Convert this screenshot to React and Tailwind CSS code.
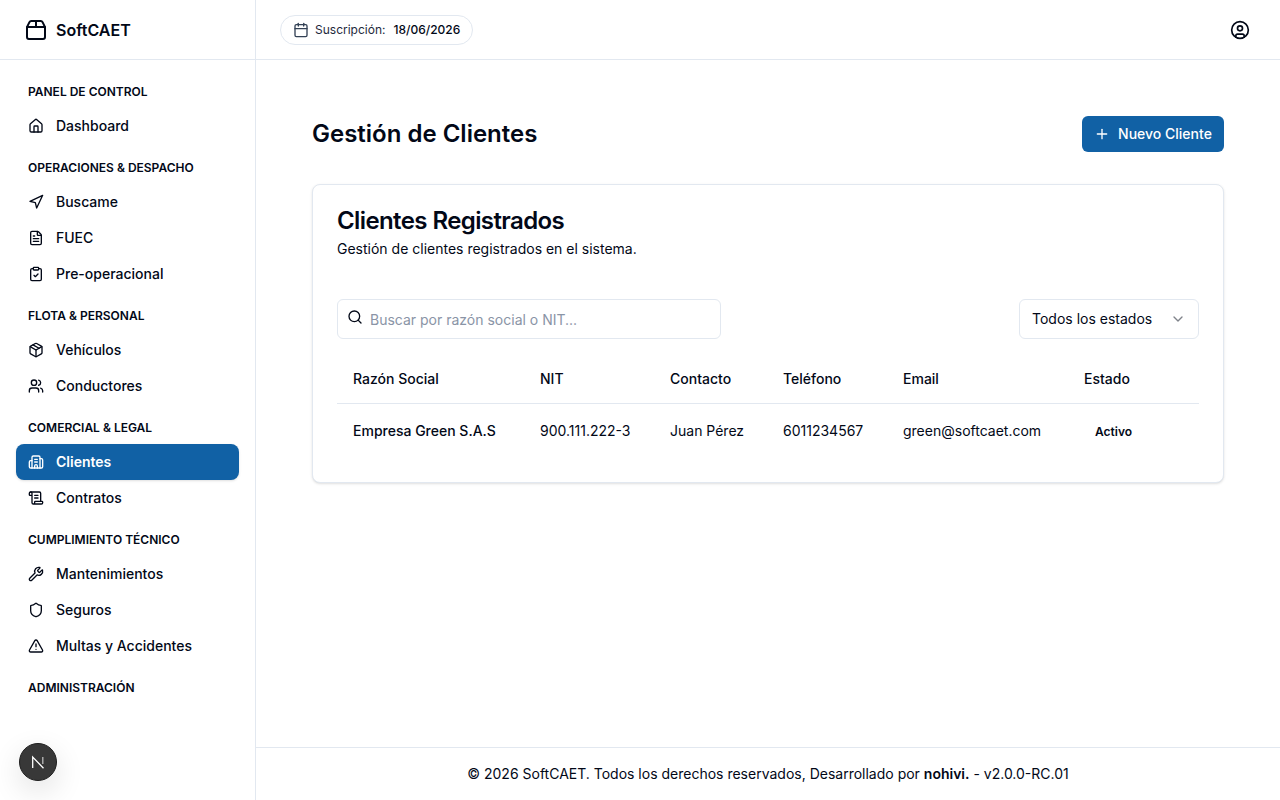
import React from 'react';
import { Package2, House, Navigation, FileText, ClipboardCheck, Package, Users, Building2, ScrollText, Wrench, Shield, TriangleAlert, Calendar, CircleUser, Plus, Search, ChevronDown } from 'lucide-react';

const sections = [
  { label: 'Panel de Control', items: [{ name: 'Dashboard', icon: House }] },
  { label: 'Operaciones & Despacho', items: [{ name: 'Buscame', icon: Navigation }, { name: 'FUEC', icon: FileText }, { name: 'Pre-operacional', icon: ClipboardCheck }] },
  { label: 'Flota & Personal', items: [{ name: 'Vehículos', icon: Package }, { name: 'Conductores', icon: Users }] },
  { label: 'Comercial & Legal', items: [{ name: 'Clientes', icon: Building2, active: true }, { name: 'Contratos', icon: ScrollText }] },
  { label: 'Cumplimiento Técnico', items: [{ name: 'Mantenimientos', icon: Wrench }, { name: 'Seguros', icon: Shield }, { name: 'Multas y Accidentes', icon: TriangleAlert }] },
  { label: 'Administración', items: [] },
];

function Sidebar() {
  return (
    <aside className="w-[256px] h-[800px] shrink-0 border-r border-[#e2e8f0] bg-white flex flex-col overflow-hidden">
      <div className="h-[60px] shrink-0 border-b border-[#e2e8f0] flex items-center gap-2 px-6">
        <Package2 className="w-6 h-6" strokeWidth={2} />
        <span className="text-base font-semibold">SoftCAET</span>
      </div>
      <nav className="flex flex-col gap-[7px] px-4 pt-[15px]">
        {sections.map((s) => (
          <div key={s.label} className="flex flex-col">
            <div className="px-3 pt-[9px] pb-[7px] mb-px text-xs leading-4 font-semibold uppercase">{s.label}</div>
            {s.items.map((it) => {
              const Icon = it.icon;
              return (
                <a key={it.name} className={it.active
                  ? 'h-9 flex items-center gap-3 px-3 rounded-lg bg-[#1161a5] text-white text-sm font-semibold shadow-sm'
                  : 'h-9 flex items-center gap-3 px-3 rounded-lg text-sm font-medium text-[#020817]'}>
                  <Icon className="w-4 h-4 shrink-0" strokeWidth={2} />
                  {it.name}
                </a>
              );
            })}
          </div>
        ))}
      </nav>
    </aside>
  );
}

function Header() {
  return (
    <header className="h-[60px] shrink-0 border-b border-[#e2e8f0] flex items-center justify-between pl-6 pr-[30px]">
      <div className="h-[30px] flex items-center gap-2 px-3 rounded-full border border-[#e2e8f0] text-xs">
        <Calendar className="w-4 h-4 -mr-0.5 text-[#334155]" strokeWidth={2} />
        <span className="text-[#1e293b]">Suscripción:</span>
        <span className="font-medium text-[#020817]">18/06/2026</span>
      </div>
      <CircleUser className="w-5 h-5" strokeWidth={2} />
    </header>
  );
}

const cols = [
  ['Razón Social', 'w-[187px]'],
  ['NIT', 'w-[130px]'],
  ['Contacto', 'w-[113px]'],
  ['Teléfono', 'w-[120px]'],
  ['Email', 'w-[181px]'],
  ['Estado', 'w-[131px]'],
];

function Card() {
  return (
    <section className="border border-[#e2e8f0] rounded-lg bg-white shadow-sm px-6 pt-6 pb-6 h-[299px]">
      <h2 className="text-2xl leading-[24px] font-semibold tracking-tight">Clientes Registrados</h2>
      <p className="text-sm leading-5 mt-[6px]">Gestión de clientes registrados en el sistema.</p>
      <div className="flex items-center justify-between mt-[40px]">
        <div className="relative w-[384px]">
          <Search className="absolute left-[10px] top-[10px] w-4 h-4" strokeWidth={2} />
          <input readOnly placeholder="Buscar por razón social o NIT..." className="w-full h-10 pl-8 pr-3 pt-[1px] rounded-md border border-[#e2e8f0] text-sm outline-none placeholder:text-[#8a94a6]" />
        </div>
        <div className="w-[180px] h-10 flex items-center justify-between px-3 rounded-md border border-[#e2e8f0] text-sm">
          <span>Todos los estados</span>
          <ChevronDown className="w-4 h-4 opacity-50" strokeWidth={2} />
        </div>
      </div>
      <table className="w-[862px] table-fixed mt-[15px] text-sm">
        <thead>
          <tr className="border-b border-[#e2e8f0] h-[49px]">
            {cols.map(([c, w]) => (
              <th key={c} className={`${w} px-4 pt-[2px] text-left font-medium`}>{c}</th>
            ))}
          </tr>
        </thead>
        <tbody>
          <tr className="h-[56px]">
            <td className="px-4 font-medium">Empresa Green S.A.S</td>
            <td className="px-4">900.111.222-3</td>
            <td className="px-4">Juan Pérez</td>
            <td className="px-4">6011234567</td>
            <td className="px-4">green@softcaet.com</td>
            <td className="px-4">
              <span className="inline-flex px-[11px] py-0.5 text-xs font-semibold">Activo</span>
            </td>
          </tr>
        </tbody>
      </table>
    </section>
  );
}

export default function App() {
  return (
    <div className="relative w-[1280px] h-[800px] overflow-hidden flex bg-white text-[#020817]" style={{ fontFamily: 'Inter, "Liberation Sans", sans-serif' }}>
      <Sidebar />
      <div className="flex-1 flex flex-col min-w-0">
        <Header />
        <main className="flex-1 px-14 pt-14">
          <div className="flex items-center justify-between h-9 mb-8">
            <h1 className="text-2xl font-semibold">Gestión de Clientes</h1>
            <button className="h-9 w-[142px] flex items-center justify-center gap-2 rounded-md bg-[#1161a5] text-white text-sm font-medium">
              <Plus className="w-4 h-4" strokeWidth={2} />
              Nuevo Cliente
            </button>
          </div>
          <Card />
        </main>
        <footer className="h-[53px] shrink-0 border-t border-[#e2e8f0] flex items-center justify-center text-sm">
          <span>© 2026 SoftCAET. Todos los derechos reservados, Desarrollado por <span className="font-semibold">nohivi.</span> - v2.0.0-RC.01</span>
        </footer>
      </div>
      <div className="absolute left-[19px] top-[743px] w-[38px] h-[38px] rounded-full bg-[#383838] border border-[#1f1f1f] shadow-[0_10px_30px_rgba(0,0,0,0.12)] flex items-center justify-center">
        <svg width="14" height="14" viewBox="0 0 14 14" fill="none">
          <path d="M1.7 13V2L12.5 13.2" stroke="#ffffff" strokeWidth="1.3" />
          <path d="M11.8 2V9" stroke="#bbbbbb" strokeWidth="1.3" />
        </svg>
      </div>
    </div>
  );
}
